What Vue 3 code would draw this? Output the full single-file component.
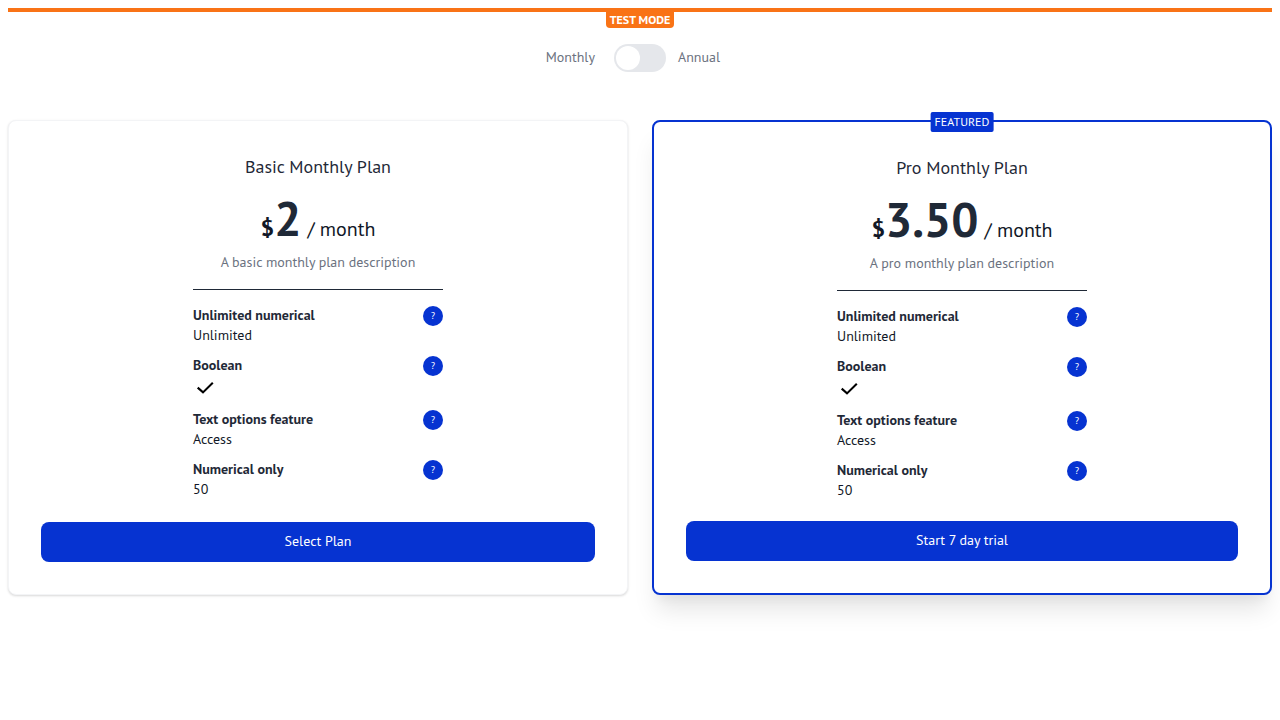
<script setup>
import { ref } from 'vue'

const annual = ref(false)

const features = [
  { name: 'Unlimited numerical', value: 'Unlimited' },
  { name: 'Boolean', value: true },
  { name: 'Text options feature', value: 'Access' },
  { name: 'Numerical only', value: '50' },
]

const plans = [
  { name: 'Basic Monthly Plan', price: '2', description: 'A basic monthly plan description', action: 'Select Plan', featured: false },
  { name: 'Pro Monthly Plan', price: '3.50', description: 'A pro monthly plan description', action: 'Start 7 day trial', featured: true },
]
</script>

<template>
  <main class="page">
    <header class="mode"><strong class="mode-tag">TEST MODE</strong></header>

    <div class="billing">
      <label class="period before" for="billing">Monthly</label>
      <input id="billing" v-model="annual" class="toggle" type="checkbox" role="switch" />
      <label class="period" for="billing">Annual</label>
    </div>

    <div class="plans">
      <section v-for="plan in plans" :key="plan.name" class="card" :class="{ featured: plan.featured }">
        <span v-if="plan.featured" class="ribbon">FEATURED</span>
        <h2 class="title">{{ plan.name }}</h2>
        <p class="price">
          <span class="currency">$</span><span class="amount">{{ plan.price }}</span><span class="per">/ month</span>
        </p>
        <p class="description">{{ plan.description }}</p>
        <ul class="features">
          <li v-for="feature in features" :key="feature.name" class="feature">
            <div>
              <h3 class="name">{{ feature.name }}</h3>
              <svg v-if="feature.value === true" class="check" viewBox="0 0 24 24" role="img" aria-label="Included">
                <path d="M4.7 12.6 10 17.4 19.8 7.8" fill="none" stroke="#000" stroke-width="2.1" />
              </svg>
              <p v-else class="value">{{ feature.value }}</p>
            </div>
            <button class="help" type="button" :aria-label="'About ' + feature.name">?</button>
          </li>
        </ul>
        <button class="action" type="button">{{ plan.action }}</button>
      </section>
    </div>
  </main>
</template>

<style>
body {
  background: #fff;
}
</style>

<style scoped>
.page {
  box-sizing: border-box;
  min-height: 100vh;
  padding: 8px;
  font-family: "PT Sans", Lato, "Noto Sans", sans-serif;
  font-size: 14px;
  line-height: 20px;
  color: #111827;
}
.page * {
  box-sizing: border-box;
}
h2, h3, p, ul {
  margin: 0;
  padding: 0;
}
button {
  font-family: inherit;
  border: 0;
  padding: 0;
  color: #fff;
  background: #0633d1;
  cursor: pointer;
}
.mode {
  display: flex;
  justify-content: center;
  border-top: 4px solid #f97316;
}
.mode-tag {
  padding: 0 4px;
  border-radius: 0 0 4px 4px;
  background: #f97316;
  color: #fff;
  font-size: 12px;
  line-height: 16px;
}
.billing {
  display: grid;
  grid-template-columns: 1fr auto 1fr;
  align-items: center;
  gap: 12px;
  margin-top: 16px;
}
.period {
  padding-bottom: 2px;
  color: #6b7280;
}
.before {
  text-align: right;
  padding-right: 7px;
}
.toggle {
  appearance: none;
  display: flex;
  width: 52px;
  height: 28px;
  margin: 0;
  padding: 2px;
  border-radius: 14px;
  background: #e5e7eb;
  cursor: pointer;
}
.toggle::before {
  content: "";
  width: 24px;
  height: 24px;
  border-radius: 50%;
  background: #fff;
}
.toggle:checked {
  justify-content: flex-end;
  background: #0633d1;
}
.plans {
  display: grid;
  grid-template-columns: repeat(auto-fit, minmax(320px, 1fr));
  gap: 24px;
  margin-top: 48px;
}
.card {
  position: relative;
  display: flex;
  flex-direction: column;
  align-items: center;
  padding: 32px;
  border: 1px solid #f3f4f6;
  border-radius: 8px;
  background: #fff;
  box-shadow: 0 1px 3px rgba(0, 0, 0, 0.1), 0 1px 2px rgba(0, 0, 0, 0.06);
}
.featured {
  border: 2px solid #0633d1;
  box-shadow: 0 20px 25px -5px rgba(0, 0, 0, 0.1), 0 10px 10px -5px rgba(0, 0, 0, 0.04);
}
.ribbon {
  position: absolute;
  top: -10px;
  left: 50%;
  transform: translateX(-50%);
  padding: 0 4px;
  border-radius: 2px;
  background: #0633d1;
  color: #fff;
  font-size: 12px;
}
.title {
  font-size: 18px;
  line-height: 28px;
  font-weight: 400;
  color: #1f2937;
}
.price {
  display: flex;
  align-items: baseline;
  margin-top: 13px;
  line-height: 1;
}
.currency {
  font-size: 24px;
  font-weight: 700;
}
.amount {
  font-size: 48px;
  font-weight: 700;
  color: #1f2937;
}
.per {
  margin-left: 6px;
  font-size: 20px;
}
.description {
  margin-top: 10px;
  color: #6b7280;
}
.features {
  width: 100%;
  max-width: 250px;
  display: grid;
  gap: 10px;
  margin-top: 17px;
  padding-top: 15px;
  border-top: 1px solid #1f2937;
  list-style: none;
}
.feature {
  display: flex;
  justify-content: space-between;
  align-items: flex-start;
}
.name {
  font-size: 14px;
  font-weight: 700;
  color: #1f2937;
}
.check {
  display: block;
  width: 24px;
  height: 24px;
}
.help {
  width: 20px;
  height: 20px;
  margin-top: 1px;
  border-radius: 50%;
  font-size: 10px;
  line-height: 20px;
}
.action {
  width: 100%;
  margin-top: 23px;
  padding: 9px 10px 11px;
  border-radius: 8px;
  font-size: 14px;
  line-height: 20px;
}
.featured .action {
  margin-top: 21px;
}
</style>
